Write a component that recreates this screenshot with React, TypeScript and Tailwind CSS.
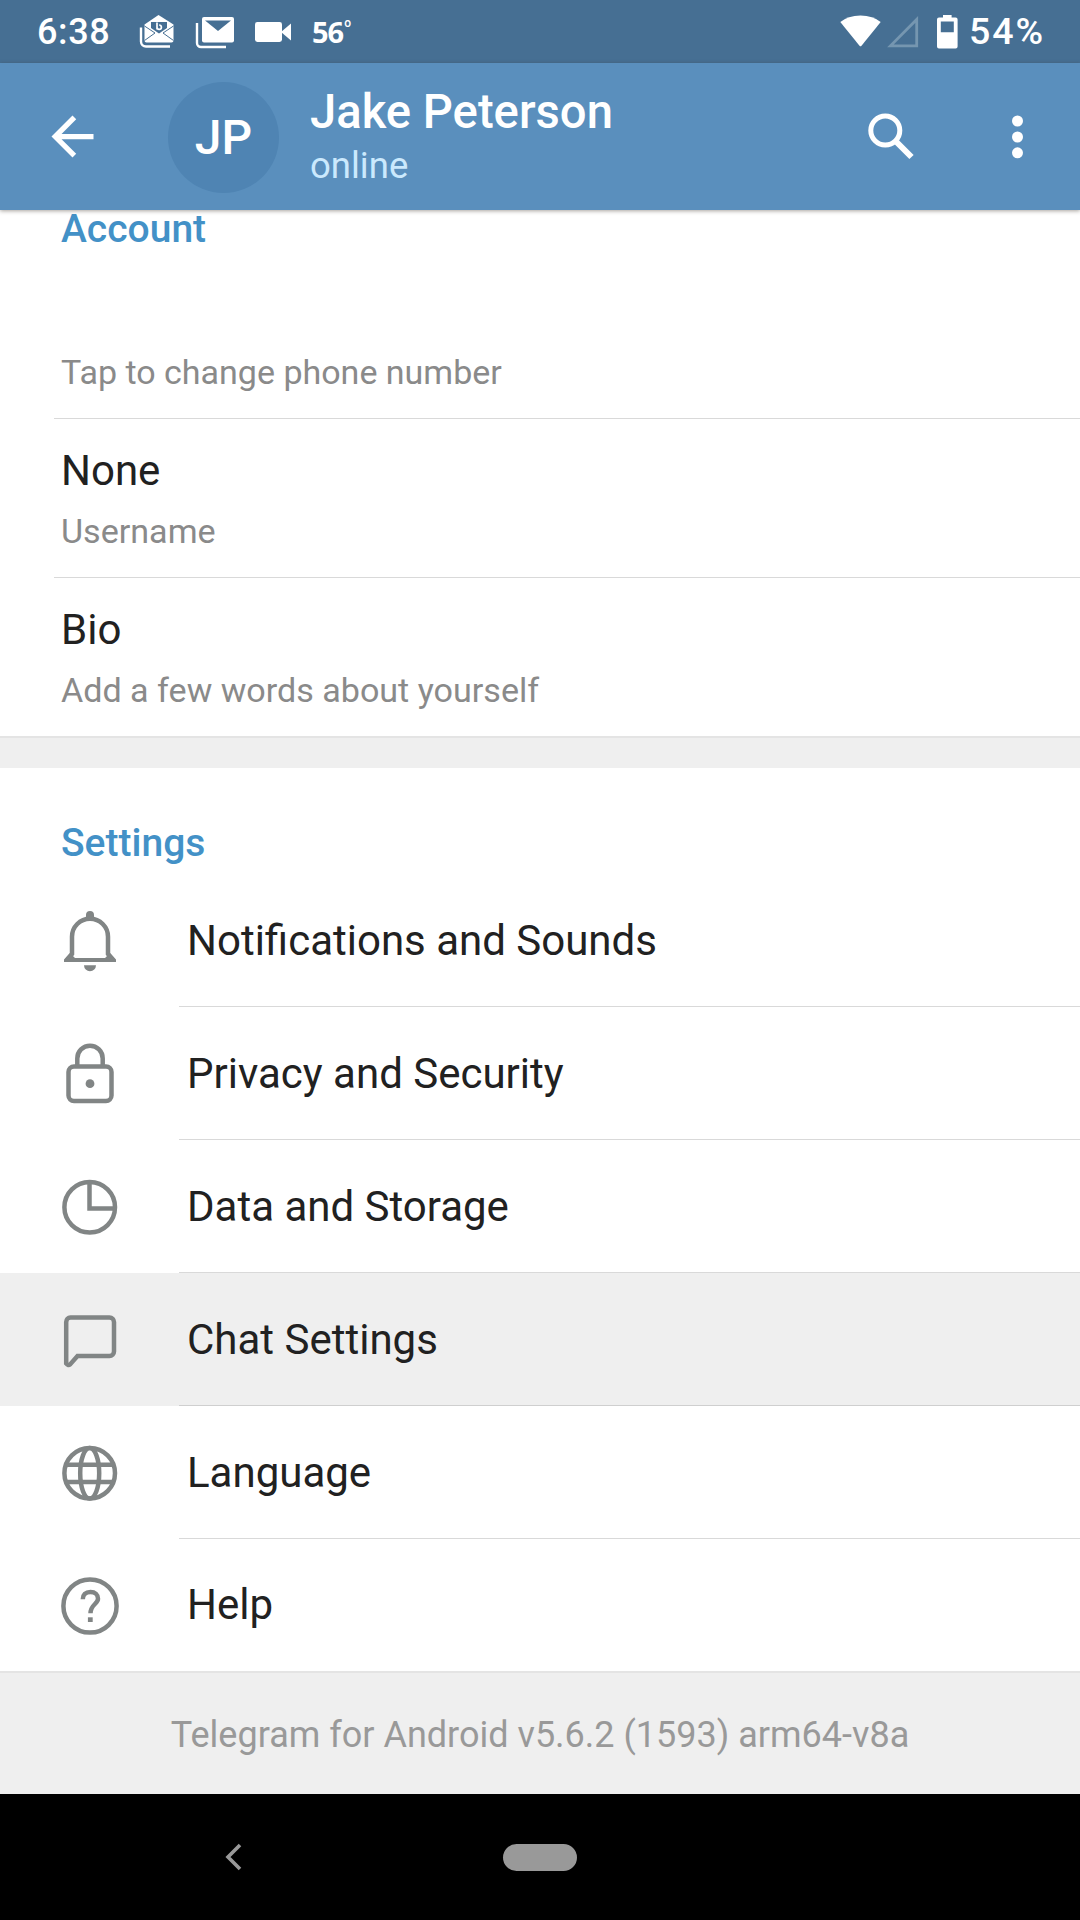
import type { ReactNode } from "react";

function StatusBar() {
  return (
    <div className="flex h-[63px] shrink-0 items-center bg-[#466f93] text-white">
      <span className="ml-[37px] w-[102px] text-[36px] font-medium leading-[62px] tracking-[0.6px]">6:38</span>
      <svg className="h-[34px] w-[36px]" viewBox="0 0 36 34" fill="none">
        <path d="M2 12.5V26.5a5 5 0 0 0 5 5H31" stroke="#fff" strokeWidth="2.4" />
        <path d="M5.5 9.5L19.5 0L34.5 9.5V25.5a2 2 0 0 1-2 2H7.5a2 2 0 0 1-2-2Z" fill="#fff" />
        <path d="M12 7H28V13L20 18.5L12 13Z" fill="#466f93" />
        <path d="M5.5 11L16 18L5.5 25.5M34.5 11L24 18L34.5 25.5" stroke="#466f93" strokeWidth="1" />
        <path d="M18 7.5V14.5M18 12.2a2.2 2.2 0 1 0 2.2-2.2" stroke="#fff" strokeWidth="1.7" />
      </svg>
      <svg className="ml-[20px] h-[34px] w-[40px]" viewBox="0 0 40 34" fill="none">
        <path d="M2 8V28a4 4 0 0 0 4 4H31" stroke="#fff" strokeWidth="2.4" />
        <rect x="7" y="2" width="32" height="25.5" rx="2" fill="#fff" />
        <path d="M10 5.5L23 16L36 5.5" fill="#466f93" />
      </svg>
      <svg className="ml-[20px] h-[22px] w-[38px]" viewBox="0 0 38 22" fill="#fff">
        <rect x="0" y="1" width="27" height="20" rx="2.4" />
        <path d="M26 11L36 2.6V19.4Z" />
      </svg>
      <span className="ml-[19px] font-['Noto_Sans'] text-[29px] font-bold leading-[62px] tracking-[-1px]">56</span>
      <span className="mb-[17px] ml-px text-[12px] font-medium leading-none">o</span>
      <svg className="ml-auto h-[34px] w-[41px]" viewBox="0 0 41 34" fill="#fff">
        <path d="M0.3 7Q8 0.4 20.5 0.4T40.7 7L21.5 30.8Q20.5 31.8 19.5 30.8Z" />
      </svg>
      <svg className="ml-[6px] h-[34px] w-[32px]" viewBox="0 0 32 34" fill="none">
        <path d="M3.5 30.8H29.7V4.5Z" stroke="#7596b0" strokeWidth="2.8" />
      </svg>
      <svg className="ml-[18px] h-[34px] w-[21px]" viewBox="0 0 21 34" fill="#fff">
        <path
          fillRule="evenodd"
          d="M6 0H14.600V2.500H18.600a2 2 0 0 1 2 2V31.500a2 2 0 0 1-2 2H2a2 2 0 0 1-2-2V4.500a2 2 0 0 1 2-2H6ZM3.800 6.500V17.300H16.800V6.500Z"
        />
      </svg>
      <span className="ml-[11px] mr-[34px] w-[77px] whitespace-nowrap pb-px text-[37.500px] font-medium leading-[60px] tracking-[1.900px]">
        54%
      </span>
    </div>
  );
}

function Header() {
  return (
    <header className="z-10 flex h-[147px] shrink-0 items-center bg-[#5a8fbd] text-white shadow-[0_1px_4px_rgba(60,50,40,0.45)]">
      <svg className="ml-[41px] h-[63px] w-[63px]" viewBox="0 0 24 24" fill="#fff">
        <path d="M20 11H7.830l5.590-5.590L12 4l-8 8 8 8 1.410-1.410L7.830 13H20z" />
      </svg>
      <div className="ml-[64px] mt-[2px] flex size-[111px] items-center justify-center rounded-full bg-[#4f84b3] pt-px text-[48px] font-medium">
        JP
      </div>
      <div className="ml-[31px] flex flex-col pt-[3px]">
        <span className="text-[47.200px] font-medium leading-[54px]">Jake Peterson</span>
        <span className="text-[36.500px] leading-[53px] text-[#cbe9fd]">online</span>
      </div>
      <svg className="ml-auto size-[48px]" viewBox="0 0 48 48" fill="none" stroke="#fff">
        <circle cx="18.300" cy="17.500" r="14.500" strokeWidth="5" />
        <path d="M29.500 29L44.500 44" strokeWidth="6" />
      </svg>
      <svg className="ml-[96px] mr-[55px] h-[48px] w-[14px]" viewBox="0 0 14 48" fill="#fff">
        <circle cx="6.500" cy="8" r="5.500" />
        <circle cx="6.500" cy="24" r="5.500" />
        <circle cx="6.500" cy="39.800" r="5.500" />
      </svg>
    </header>
  );
}

function AccountRow({ title, hint }: { title: string; hint: string }) {
  return (
    <div className="ml-[54px] flex h-[159px] flex-col border-t border-[#d9d9d9] pl-[7px] pt-[27px]">
      <span className="text-[42px] leading-[50px] text-[#212121]">{title}</span>
      <span className="mt-[11px] text-[34.100px] leading-[48px] text-[#8a8a8a]">{hint}</span>
    </div>
  );
}

const icons: Record<string, ReactNode> = {
  bell: (
    <>
      <path d="M-23 20L-18 14V-3.300A18 18 0 0 1 18 -3.300V14L23 20" />
      <path d="M-26 22V19.500L-20 13L-15 18H15L20 13L26 19.500V22Z" fill="#818585" stroke="none" />
      <path d="M-4 -22V-25A4 4 0 0 1 4 -25V-22ZM-6 25.300H6A6 6 0 0 1 -6 25.300Z" fill="#818585" stroke="none" />
    </>
  ),
  lock: (
    <>
      <path d="M-12.700 -8V-14.600A12.700 12.700 0 0 1 12.700 -14.600V-8" />
      <rect x="-21.500" y="-6.500" width="43" height="34.500" rx="5.500" />
      <circle cx="0" cy="10.700" r="4.400" fill="#818585" stroke="none" />
    </>
  ),
  pie: (
    <>
      <circle cx="-0.300" cy="1.300" r="25.300" />
      <path d="M-0.500 -24V2.500H25" />
    </>
  ),
  chat: (
    <path d="M-19.500 -21.500H19.500A4.500 4.500 0 0 1 24 -17V12.500A4.500 4.500 0 0 1 19.500 17H-12.500L-19.700 25.200Q-22 27 -23.800 24.500V-17A4.500 4.500 0 0 1 -19.500 -21.500Z" />
  ),
  globe: (
    <>
      <circle cx="-0.300" cy="1.300" r="25.300" />
      <ellipse cx="-0.300" cy="1.300" rx="9.500" ry="25.300" />
      <path d="M-24 -7.300H23.500M-24 10H23.500" />
    </>
  ),
  help: (
    <>
      <circle cx="0" cy="1" r="26.600" />
      <path d="M-7.200 -5.800C-7.200 -10.300 -4.500 -13 0.400 -13C5.200 -13 8 -10.300 8 -6.300C8 -1 0.500 -0.500 0.500 8.300" />
      <path d="M0.300 12.300V17" strokeWidth="4.800" />
    </>
  ),
};

function SettingsRow({ icon, label, active, last }: { icon: string; label: string; active?: boolean; last?: boolean }) {
  return (
    <div className={active ? "flex h-[133px] shrink-0 bg-[#efefef]" : last ? "flex h-[132px] shrink-0" : "flex h-[133px] shrink-0"}>
      <div className="flex h-[132px] w-[179px] items-center pl-[54px]">
        <svg className="size-[72px]" viewBox="-36 -36 72 72" fill="none" stroke="#818585" strokeWidth="4.500">
          {icons[icon]}
        </svg>
      </div>
      <div
        className={
          last
            ? "flex flex-1 items-center pl-[8px]"
            : active
              ? "flex flex-1 items-center border-b border-[#cfcfcf] pl-[8px] pt-[2px]"
              : "flex flex-1 items-center border-b border-[#d9d9d9] pl-[8px] pt-[2px]"
        }
      >
        <span className="text-[42px] leading-[50px] text-[#212121]">{label}</span>
      </div>
    </div>
  );
}

export default function App() {
  return (
    <div className="flex h-[1920px] w-[1080px] flex-col overflow-hidden bg-white font-[Roboto,sans-serif]">
      <StatusBar />
      <Header />
      <section className="flex h-[526px] shrink-0 flex-col">
        <h2 className="ml-[61px] h-[126px] shrink-0 text-[39px] font-medium leading-[38px] text-[#4391c7]">Account</h2>
        <p className="ml-[61px] h-[82px] shrink-0 text-[34px] leading-[72px] text-[#8a8a8a]">
          Tap to change phone number
        </p>
        <AccountRow title="None" hint="Username" />
        <AccountRow title="Bio" hint="Add a few words about yourself" />
      </section>
      <div className="h-[32px] shrink-0 border-t-2 border-[#e4e4e4] bg-[#efefef]" />
      <section className="flex h-[903px] shrink-0 flex-col">
        <h2 className="ml-[61px] h-[106px] shrink-0 pt-[50px] text-[39px] font-medium leading-[50px] text-[#4391c7]">
          Settings
        </h2>
        <SettingsRow icon="bell" label="Notifications and Sounds" />
        <SettingsRow icon="lock" label="Privacy and Security" />
        <SettingsRow icon="pie" label="Data and Storage" />
        <SettingsRow icon="chat" label="Chat Settings" active />
        <SettingsRow icon="globe" label="Language" />
        <SettingsRow icon="help" label="Help" last />
      </section>
      <footer className="flex h-[123px] shrink-0 items-center justify-center border-t-2 border-[#e4e4e4] bg-[#efefef] pt-[2px] text-[36px] text-[#999999]">
        Telegram for Android v5.6.2 (1593) arm64-v8a
      </footer>
      <nav className="flex flex-1 items-center bg-black">
        <svg className="ml-[225px] h-[28px] w-[18px]" viewBox="0 0 18 28" fill="none" stroke="#999999" strokeWidth="3.600">
          <path d="M15 2L3 14L15 26" />
        </svg>
        <div className="ml-[260px] h-[27px] w-[74px] rounded-full bg-[#999999]" />
      </nav>
    </div>
  );
}
